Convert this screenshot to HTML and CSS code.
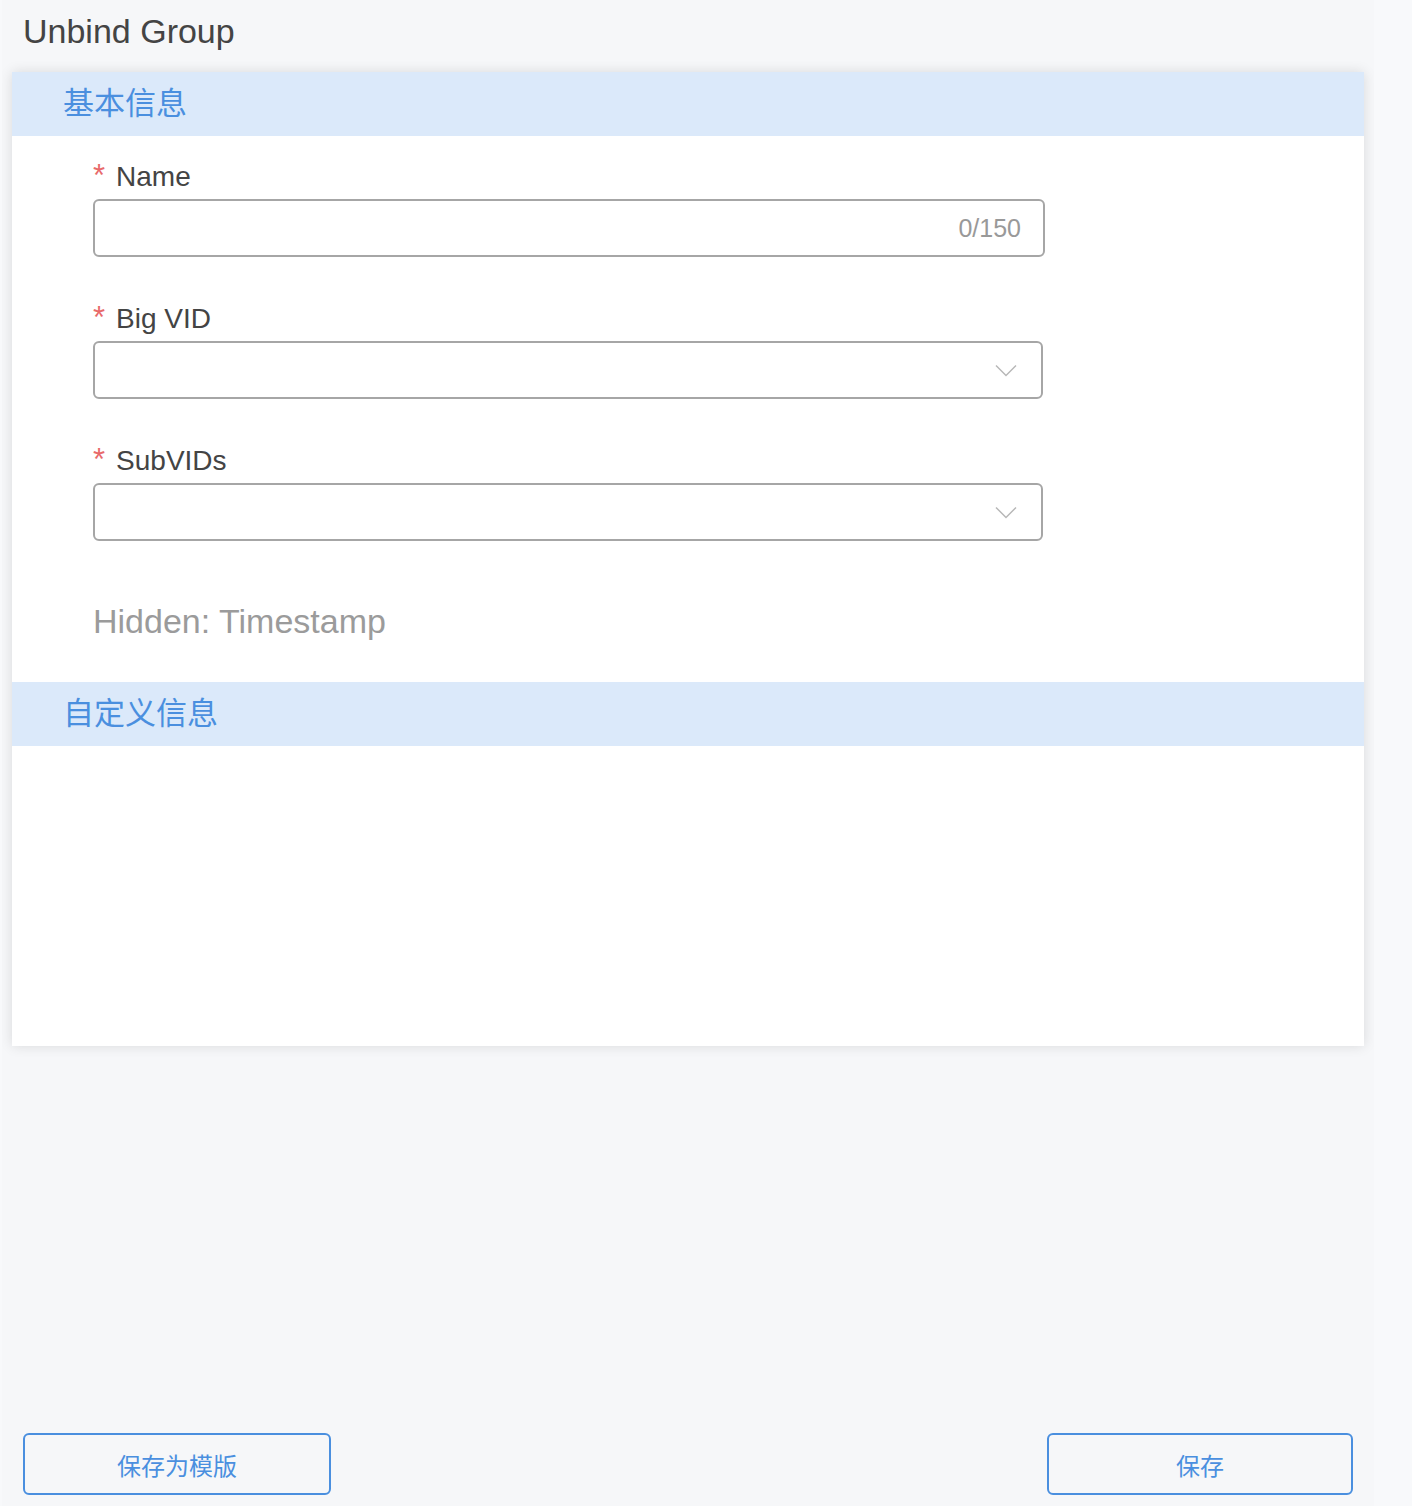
FILE: index.html
```html
<!DOCTYPE html>
<html lang="zh-CN">
<head>
    <meta charset="UTF-8">
    <title>Unbind Group</title>
    <link rel="stylesheet" href="styles.css">
</head>
<body>

<div class="page">
    <div class="page-title">Unbind Group</div>

    <div class="card">
        <div class="section-head">基本信息</div>
        <div class="section-body">
            <div class="field">
                <label class="field-label"><span class="required">*</span>Name</label>
                <div class="input-box">
                    <span class="counter">0/150</span>
                </div>
            </div>

            <div class="field">
                <label class="field-label"><span class="required">*</span>Big VID</label>
                <div class="input-box select">
                    <svg class="chevron" width="22" height="14" viewBox="0 0 22 14">
                        <path d="M1 1.5 L11 11.5 L21 1.5" fill="none" stroke="#b8b8b8" stroke-width="1.5"/>
                    </svg>
                </div>
            </div>

            <div class="field">
                <label class="field-label"><span class="required">*</span>SubVIDs</label>
                <div class="input-box select">
                    <svg class="chevron" width="22" height="14" viewBox="0 0 22 14">
                        <path d="M1 1.5 L11 11.5 L21 1.5" fill="none" stroke="#b8b8b8" stroke-width="1.5"/>
                    </svg>
                </div>
            </div>

            <div class="hidden-note">Hidden: Timestamp</div>
        </div>

        <div class="section-head">自定义信息</div>
        <div class="section-body custom"></div>
    </div>

    <div class="footer">
        <button class="btn btn-wide">保存为模版</button>
        <button class="btn">保存</button>
    </div>
</div>

</body>
</html>
```

FILE: styles.css
```css
body {
    margin: 0;
    background-color: #f8f9fb;
    font-family: "Liberation Sans", "Noto Sans CJK SC", sans-serif;
}

.page {
    margin-left: 2px;
    width: 1372px;
    min-height: 100vh;
    background-color: #f6f7f9;
    display: flex;
    flex-direction: column;
    overflow: hidden;
}

.page-title {
    padding: 12px 0 0 21px;
    font-size: 34px;
    line-height: 38px;
    color: #444;
}

.card {
    margin: 22px 10px 0 10px;
    background-color: #fff;
    box-shadow: 0 0 12px rgba(0, 0, 0, 0.12);
}

.section-head {
    height: 64px;
    padding-left: 51px;
    background-color: #dbe9fa;
    color: #4a8fdf;
    font-size: 31px;
    line-height: 64px;
}

.section-body {
    padding: 24px 0 41px 81px;
}

.section-body.custom {
    height: 300px;
    padding: 0;
}

.field {
    margin-bottom: 45px;
}

.field-label {
    display: block;
    height: 34px;
    font-size: 28px;
    line-height: 34px;
    color: #444;
    margin-bottom: 5px;
}

.required {
    color: #e86a6a;
    font-size: 31px;
    line-height: 0;
    margin-right: 11px;
}

.input-box {
    box-sizing: border-box;
    width: 952px;
    height: 58px;
    border: 2px solid #a6a6a6;
    border-radius: 6px;
    display: flex;
    align-items: center;
    justify-content: flex-end;
    padding-right: 22px;
}

.input-box.select {
    width: 950px;
    padding-right: 24px;
}

.counter {
    font-size: 25px;
    color: #999;
}

.chevron {
    display: block;
    margin-top: 2px;
}

.hidden-note {
    margin-top: 60px;
    font-size: 34px;
    line-height: 40px;
    color: #9b9b9b;
}

.footer {
    margin-top: auto;
    display: flex;
    justify-content: space-between;
    padding: 0 21px 11px 21px;
}

.btn {
    box-sizing: border-box;
    width: 306px;
    height: 62px;
    background: transparent;
    border: 2px solid #4a8fdf;
    border-radius: 6px;
    color: #4a8fdf;
    font-family: "Liberation Sans", "Noto Sans CJK SC", sans-serif;
    font-size: 24px;
}

.btn-wide {
    width: 308px;
}
```
